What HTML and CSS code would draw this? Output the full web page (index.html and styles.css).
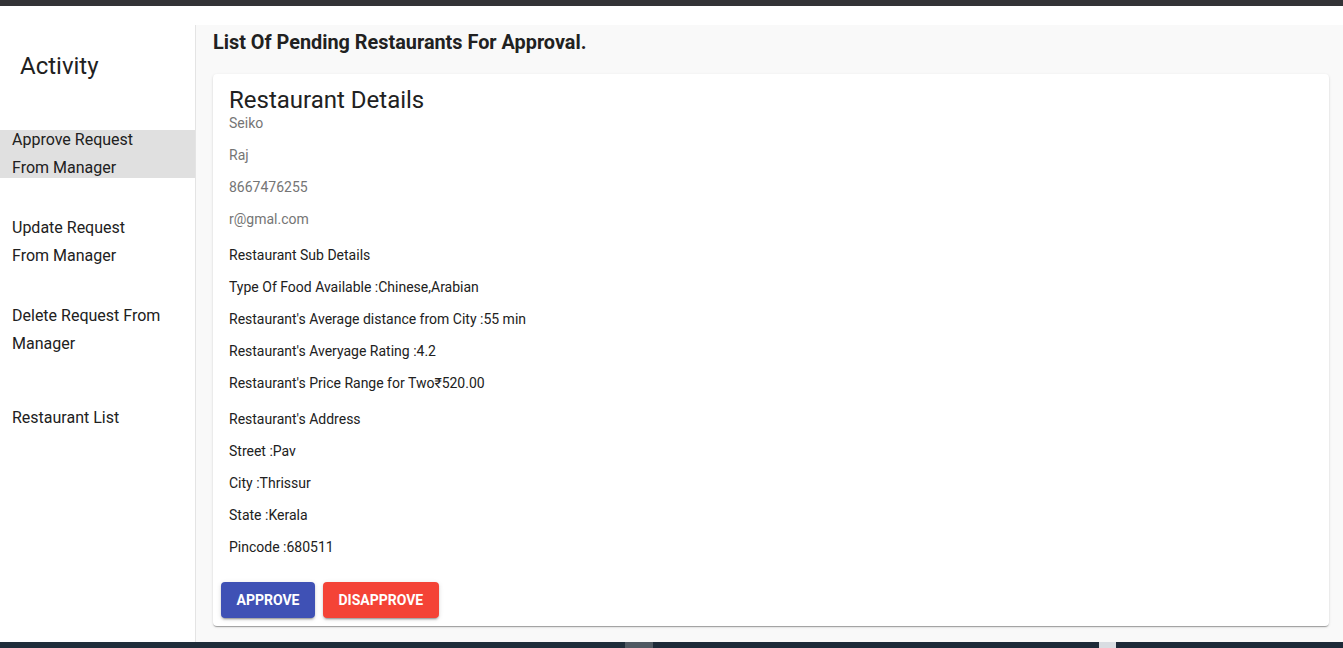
FILE: index.html
```html
<!DOCTYPE html>
<html lang="en">
<head>
<meta charset="utf-8">
<title>Pending Restaurants</title>
<link rel="stylesheet" href="styles.css">
</head>
<body>
<div class="topbar"></div>
<div class="page">
  <div class="layout">
    <aside class="sidebar">
      <div class="sidebar-title">Activity</div>
      <nav class="menu">
        <div class="menu-item active"><span>Approve Request From Manager</span></div>
        <div class="menu-item"><span>Update Request From Manager</span></div>
        <div class="menu-item"><span>Delete Request From Manager</span></div>
        <div class="menu-item"><span>Restaurant List</span></div>
      </nav>
    </aside>
    <main class="main">
      <h1 class="page-title">List Of Pending Restaurants For Approval.</h1>
      <section class="card">
        <div class="card-content">
          <h2 class="card-title">Restaurant Details</h2>
          <div class="group muted">
            <p>Seiko</p>
            <p>Raj</p>
            <p>8667476255</p>
            <p>r@gmal.com</p>
          </div>
          <div class="group">
            <p>Restaurant Sub Details</p>
            <p>Type Of Food Available :Chinese,Arabian</p>
            <p>Restaurant's Average distance from City :55 min</p>
            <p>Restaurant's Averyage Rating :4.2</p>
            <p>Restaurant's Price Range for Two₹520.00</p>
          </div>
          <div class="group">
            <p>Restaurant's Address</p>
            <p>Street :Pav</p>
            <p>City :Thrissur</p>
            <p>State :Kerala</p>
            <p>Pincode :680511</p>
          </div>
        </div>
        <div class="card-actions">
          <button class="btn btn-primary">Approve</button>
          <button class="btn btn-danger">Disapprove</button>
        </div>
      </section>
    </main>
  </div>
</div>
<div class="taskbar">
  <span class="tb-seg tb-a"></span>
  <span class="tb-seg tb-b"></span>
  <span class="tb-seg tb-c"></span>
  <span class="tb-seg tb-d"></span>
</div>
</body>
</html>
```

FILE: styles.css
```css
* { box-sizing: border-box; }
html, body {
  margin: 0;
  padding: 0;
  height: 648px;
  overflow: hidden;
  font-family: Roboto, "Liberation Sans", Arial, sans-serif;
  background: #ffffff;
  color: #212121;
}
.topbar {
  height: 6px;
  background: #333336;
}
.page {
  padding-top: 19px;
  background: #ffffff;
}
.layout {
  display: flex;
  height: 617px;
}
.sidebar {
  width: 196px;
  flex: 0 0 196px;
  background: #ffffff;
  border-right: 1px solid #e4e4e4;
  padding-top: 25px;
}
.sidebar-title {
  font-size: 24px;
  line-height: 32px;
  padding-left: 20px;
  color: #212121;
}
.menu {
  margin-top: 48px;
  display: flex;
  flex-direction: column;
  gap: 40px;
}
.menu-item {
  height: 48px;
  display: flex;
  align-items: center;
  padding: 0 12px;
  font-size: 16px;
  line-height: 28px;
  color: #212121;
}
.menu-item span { display: block; max-width: 152px; }
.menu-item.active { background: #e0e0e0; }
.main {
  flex: 1;
  background: #f9f9f9;
  padding: 6px 14px 0 17px;
}
.page-title {
  margin: 0;
  font-size: 19.85px;
  line-height: 24px;
  font-weight: 700;
  color: #212121;
}
.card {
  margin-top: 19px;
  background: #ffffff;
  border-radius: 4px;
  box-shadow: 0 2px 1px -1px rgba(0,0,0,0.2), 0 1px 1px 0 rgba(0,0,0,0.14), 0 1px 3px 0 rgba(0,0,0,0.12);
}
.card-content {
  padding: 13px 16px 17px;
}
.card-title {
  margin: 0;
  font-size: 24px;
  line-height: 26px;
  font-weight: 400;
  color: #212121;
}
.group { display: flex; flex-direction: column; gap: 12px; }
.group + .group { margin-top: 16px; }
.group p {
  margin: 0;
  font-size: 14px;
  line-height: 20px;
  color: #212121;
}
.group.muted p { color: #757575; }
.card-actions {
  display: flex;
  gap: 8px;
  padding: 8px;
}
.btn {
  height: 36px;
  padding: 0 15.5px;
  border: none;
  border-radius: 4px;
  font-family: Roboto, "Liberation Sans", Arial, sans-serif;
  font-size: 14px;
  font-weight: 700;
  letter-spacing: 0;
  text-transform: uppercase;
  color: #ffffff;
  box-shadow: 0 3px 1px -2px rgba(0,0,0,0.2), 0 2px 2px 0 rgba(0,0,0,0.14), 0 1px 5px 0 rgba(0,0,0,0.12);
}
.btn-primary { background: #3f51b5; }
.btn-danger { background: #f44336; }
.taskbar {
  height: 6px;
  background: #1d2a38;
  display: flex;
}
.tb-seg { display: block; height: 6px; }
.tb-a { width: 625px; background: #1f2d3a; }
.tb-b { width: 28px; background: #4f5962; }
.tb-c { width: 446px; background: #1d2a38; }
.tb-d { width: 17px; background: #d9dde2; }
```
